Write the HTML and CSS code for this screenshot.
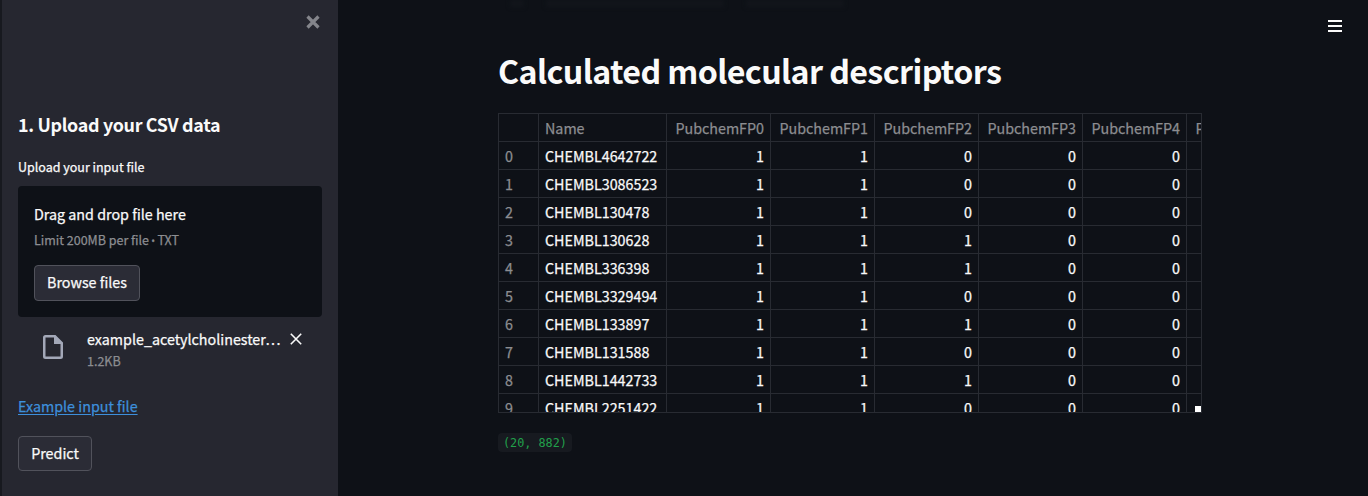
FILE: index.html
```html
<!DOCTYPE html>
<html lang="en">
<head>
<meta charset="utf-8">
<title>Calculated molecular descriptors</title>
<link rel="stylesheet" href="styles.css">
</head>
<body>
<div class="app">
  <aside class="sidebar">
    <div class="sidebar-top">
      <svg class="close" width="14" height="14" viewBox="0 0 14 14"><path d="M1.500 1.500l11 11M12.500 1.500l-11 11"/></svg>
    </div>
    <h2 class="heading">1. Upload your CSV data</h2>
    <label class="label">Upload your input file</label>
    <section class="dropzone">
      <div class="drop-title">Drag and drop file here</div>
      <div class="small">Limit 200MB per file <span class="bullet">•</span> TXT</div>
      <button class="button browse">Browse files</button>
    </section>
    <div class="file">
      <svg class="file-icon" width="20" height="24" viewBox="0 0 20 24"><path d="M2.500 0H12.500L20 7.500V21.500Q20 24 17.500 24H2.500Q0 24 0 21.500V2.500Q0 0 2.500 0ZM2.500 2.500V21.500H17.500V9H11V2.500Z" fill-rule="evenodd"/></svg>
      <div class="file-info">
        <div class="file-name">example_acetylcholinester<span class="dots">...</span></div>
        <div class="small">1.2KB</div>
      </div>
      <svg class="remove" width="12" height="12" viewBox="0 0 12 12"><path d="M.8.800l10.400 10.400M11.200.800L.8 11.200"/></svg>
    </div>
    <a class="link" href="#">Example input file</a>
    <button class="button predict">Predict</button>
  </aside>
  <main class="main">
    <div class="ghost"><i class="g1"></i><i class="g2"></i><i class="g3"></i></div>
    <svg class="menu" width="14" height="14" viewBox="0 0 14 14"><path d="M0 2h14M0 7h14M0 12h14"/></svg>
    <h1 class="title">Calculated molecular descriptors</h1>
    <div class="frame">
      <div class="grid" id="grid"></div>
      <span class="corner"></span>
    </div>
    <code class="shape">(20, 882)</code>
  </main>
</div>
<script src="table.js"></script>
</body>
</html>
```
FILE: styles.css
```css
* { box-sizing: border-box; }
body {
  margin: 0;
  background: #0e1117;
  color: #fafafa;
  font-family: "Noto Sans CJK SC", "Noto Sans", sans-serif;
  font-size: 14.3px;
  line-height: 24px;
  -webkit-text-stroke: 0.25px currentColor;
}
.app { display: flex; height: 496px; overflow: hidden; }
.sidebar {
  width: 338px;
  flex: none;
  display: flex;
  flex-direction: column;
  align-items: flex-start;
  padding: 0 16px;
  border-left: 2px solid #17191f;
  background: #262730;
}
.sidebar-top { display: flex; justify-content: flex-end; align-self: stretch; height: 110px; padding: 15px 2px 0; }
.close path { fill: none; stroke: #84858b; stroke-width: 3.2; }
.heading { margin: 0; font-size: 17.9px; line-height: 28px; font-weight: 700; letter-spacing: -0.32px; -webkit-text-stroke: 0; }
.label { margin-top: 19px; font-size: 12.5px; line-height: 20px; }
.dropzone {
  align-self: stretch;
  height: 131px;
  margin-top: 9px;
  padding: 16px;
  border-radius: 4px;
  background: #0e1117;
}
.small { font-size: 12.5px; line-height: 20px; color: #8c8d91; }
.bullet { margin: 0 -0.5px; font-family: "Open Sans", sans-serif; font-size: 10px; line-height: 1; }
.drop-title { margin-bottom: 4px; }
.button {
  display: block;
  padding: 0;
  border: 1px solid #51525b;
  border-radius: 4px;
  background: #2b2c36;
  color: #fafafa;
  font: inherit;
}
.browse { width: 106px; height: 36px; margin-top: 15px; padding-bottom: 2px; }
.file { display: flex; align-self: stretch; height: 62px; padding: 10px 20px 0 25px; }
.file-icon { margin-top: 8px; fill: #a3a8b8; }
.file-info { width: 195px; margin-left: 24px; white-space: nowrap; }
.dots { letter-spacing: 1.3px; }
.remove { margin: 6px 0 0 8px; }
.remove path { fill: none; stroke: #fafafa; stroke-width: 1.6; }
.link { margin-top: 15px; color: #3d8fdc; text-underline-offset: 2px; }
.predict { width: 74px; height: 35px; margin-top: 18px; padding-bottom: 1px; }
.main { position: relative; flex: 1; padding: 48px 0 0 160px; }
.title { margin: 0; font-size: 32.2px; line-height: 44px; font-weight: 700; letter-spacing: -0.61px; white-space: nowrap; -webkit-text-stroke: 0; }
.menu { position: absolute; top: 19px; right: 26px; }
.menu path { stroke: #fafafa; stroke-width: 2; }
.ghost { position: absolute; top: 0; left: 172px; display: flex; filter: blur(2px); }
.ghost i { height: 7px; background: #12151b; }
.g1 { width: 14px; margin-right: 22px; }
.g2 { width: 178px; margin-right: 22px; }
.g3 { width: 98px; }
.frame {
  position: relative;
  width: 704px;
  height: 300px;
  margin-top: 21px;
  overflow: hidden;
  border: 1px solid #282b32;
}
.grid { display: grid; grid-template-columns: 40px 128px repeat(6, 104px); grid-auto-rows: 28px; width: 792px; }
.cell {
  padding: 0 6px;
  border-right: 1px solid #282b32;
  border-bottom: 1px solid #282b32;
  line-height: 27px;
}
.muted { color: #8c8d91; }
.num { text-align: right; }
.corner { position: absolute; right: 0; bottom: 0; width: 6px; height: 6px; background: #fff; }
.shape {
  display: block;
  width: 74px;
  height: 19px;
  margin-top: 20px;
  padding: 1px 0 0 5px;
  border-radius: 4px;
  background: #171a20;
  color: #21a04b;
  font: 11.8px/19px "DejaVu Sans Mono", monospace;
  -webkit-text-stroke: 0;
}
```
FILE: table.js
```js
const header = ["", "Name", "PubchemFP0", "PubchemFP1", "PubchemFP2", "PubchemFP3", "PubchemFP4", "PubchemFP5"];
const names = ["CHEMBL4642722", "CHEMBL3086523", "CHEMBL130478", "CHEMBL130628", "CHEMBL336398",
  "CHEMBL3329494", "CHEMBL133897", "CHEMBL131588", "CHEMBL1442733", "CHEMBL2251422"];
const fp2 = [0, 0, 0, 1, 1, 0, 1, 0, 1, 0];
const grid = document.getElementById("grid");

function addCell(text, className) {
  const cell = document.createElement("div");
  cell.className = "cell " + className;
  cell.textContent = text;
  grid.append(cell);
}

header.forEach((text, i) => addCell(text, i > 1 ? "muted num" : "muted"));
names.forEach((name, row) => {
  addCell(row, "muted");
  addCell(name, "");
  [1, 1, fp2[row], 0, 0, ""].forEach(value => addCell(value, "num"));
});
```
